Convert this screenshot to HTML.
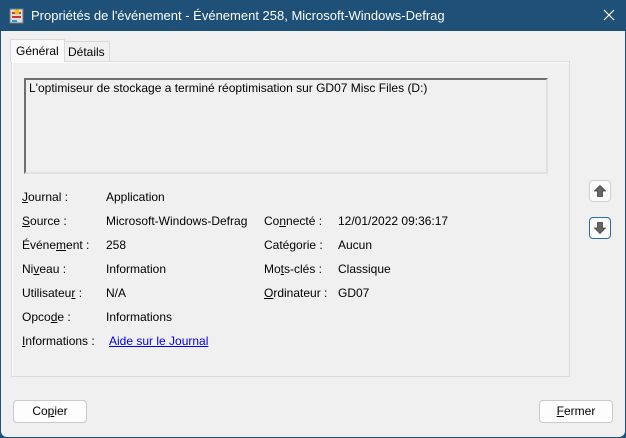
<!DOCTYPE html>
<html><head><meta charset="utf-8"><style>
*{margin:0;padding:0;box-sizing:border-box}
body{width:626px;height:438px;background:#1e5078;font-family:"Liberation Sans",sans-serif;font-size:12px;color:#000;position:relative;overflow:hidden}
.win{position:absolute;left:1px;top:31px;width:624px;height:406px;background:#f0f0f0;border-radius:0 0 6px 6px}
.title{position:absolute;left:31px;top:8px;color:#fff;font-size:13px}
.abs{position:absolute}
.tab{position:absolute;border:1px solid #d9d9d9;border-bottom:none;background:#f0f0f0;padding:3px 5px}
.panel{position:absolute;left:11px;top:61px;width:559px;height:316px;border:1px solid #dadada;background:#f0f0f0;box-shadow:inset 1px 1px 0 #fdfdfd}
.box{position:absolute;left:24px;top:78px;width:524px;height:96px;border:2px solid #6f6f6f;border-right-color:#e0e0e0;border-bottom-color:#e0e0e0;background:#f0f0f0;padding:1px 3px}
.btn{position:absolute;width:74px;height:23px;border:1px solid #c9c9c9;border-radius:4px;background:#fdfdfd;text-align:center;line-height:21px}
.ab{position:absolute;width:22px;height:22px;border:1px solid #cfcfcf;border-radius:4px;background:#fbfbfb}
.ab svg{position:absolute;left:4px;top:4px}
u{text-decoration:underline}
a{color:#0000ee;text-decoration:underline}
</style></head><body>
<svg class="abs" style="left:9px;top:8px" width="16" height="16"><rect x="1" y="1" width="13" height="14" fill="#ddd" stroke="#777"/><rect x="3" y="4" width="9" height="2" fill="#c33"/><rect x="3" y="8" width="9" height="2" fill="#c33"/><rect x="3" y="12" width="5" height="2" fill="#39c"/><circle cx="8" cy="4" r="2.5" fill="#f2c200"/></svg>
<div class="title">Propriétés de l'événement - Événement 258, Microsoft-Windows-Defrag</div>
<svg class="abs" style="left:603px;top:9px" width="12" height="12"><path d="M1 1L11 11M11 1L1 11" stroke="#fff" stroke-width="1.2"/></svg>
<div class="win"></div>
<div class="panel"></div>
<div class="tab" style="left:63px;top:41px;height:20px;padding:3px 4px">Détails</div>
<div class="tab" style="left:10px;top:39px;height:23px;background:#f9f9f9;padding-top:4px;z-index:2">Général</div>
<div class="box">L'optimiseur de stockage a terminé réoptimisation sur GD07 Misc Files (D:)</div>
<div class="abs" style="left:22px;top:185px;line-height:24px">
<div><u>J</u>ournal :</div><div><u>S</u>ource :</div><div>Événe<u>m</u>ent :</div><div>Ni<u>v</u>eau :</div><div>Utilisateu<u>r</u> :</div><div>Opco<u>d</u>e :</div><div><u>I</u>nformations :</div>
</div>
<div class="abs" style="left:106px;top:185px;line-height:24px">
<div>Application</div><div>Microsoft-Windows-Defrag</div><div>258</div><div>Information</div><div>N/A</div><div>Informations</div><div style="margin-left:3px"><a>Aide sur le Journal</a></div>
</div>
<div class="abs" style="left:264px;top:209px;line-height:24px">
<div>Co<u>n</u>necté :</div><div>Caté<u>g</u>orie :</div><div>Mo<u>t</u>s-clés :</div><div><u>O</u>rdinateur :</div>
</div>
<div class="abs" style="left:338px;top:209px;line-height:24px">
<div>12/01/2022 09:36:17</div><div>Aucun</div><div>Classique</div><div>GD07</div>
</div>
<div class="ab" style="left:589px;top:180px"><svg width="12" height="12"><path d="M6 0.5L11.5 6H8.5V11.5H3.5V6H0.5Z" fill="#666" stroke="#444" stroke-width="0.8"/></svg></div>
<div class="ab" style="left:589px;top:217px;border-color:#2a6cb0"><svg width="12" height="12"><path d="M6 11.5L11.5 6H8.5V0.5H3.5V6H0.5Z" fill="#666" stroke="#444" stroke-width="0.8"/></svg></div>
<div class="btn" style="left:13px;top:400px">Co<u>p</u>ier</div>
<div class="btn" style="left:539px;top:400px"><u>F</u>ermer</div>
</body></html>
